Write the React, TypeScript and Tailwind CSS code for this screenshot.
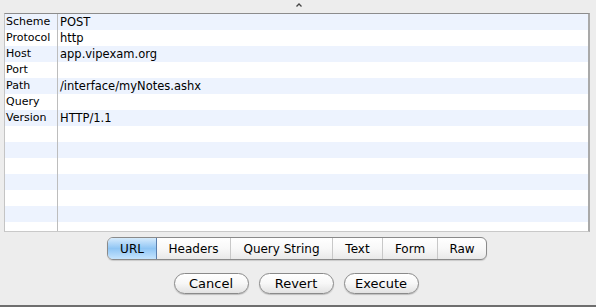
import React from 'react';

const rows: [string, string][] = [
    ['Scheme', 'POST'],
    ['Protocol', 'http'],
    ['Host', 'app.vipexam.org'],
    ['Port', ''],
    ['Path', '/interface/myNotes.ashx'],
    ['Query', ''],
    ['Version', 'HTTP/1.1'],
    ['', ''],
    ['', ''],
    ['', ''],
    ['', ''],
    ['', ''],
    ['', ''],
    ['', ''],
];

const tabs = [
    { label: 'URL', w: 'w-[49px]' },
    { label: 'Headers', w: 'w-[74px]' },
    { label: 'Query String', w: 'w-[102px]' },
    { label: 'Text', w: 'w-[50px]' },
    { label: 'Form', w: 'w-[55px]' },
    { label: 'Raw', w: 'w-[48px]' },
];

const App = () => {
    return (
        <div className="relative h-[307px] w-[596px] overflow-hidden bg-[#ededed] font-['DejaVu_Sans',sans-serif] text-black">
            {/* splitter grip */}
            <div className="flex h-[13px] justify-center pl-[1px] pt-[3px]">
                <svg width="6" height="4" viewBox="0 0 6 4">
                    <path d="M0.5 3.5 L3 1 L5.5 3.5" fill="none" stroke="#444" strokeWidth="1.3" />
                </svg>
            </div>
            {/* url table */}
            <div className="ml-[4px] h-[219px] w-[586px] overflow-hidden border-l border-t border-r-2 border-b border-l-[#c4c4c4] border-t-[#8c8c8c] border-r-[#a9a9a9] border-b-[#c9c9c9] bg-white">
                {rows.map(([name, value], i) => (
                    <div
                        key={i}
                        className={`flex h-[16px] leading-[16px] ${i % 2 === 0 ? 'bg-[#edf3fe]' : 'bg-white'}`}
                    >
                        <div className="w-[53px] shrink-0 border-r border-[#bdbdbd] pl-[1px] text-[11px]">{name}</div>
                        <div className="pl-[2px] text-[11.5px]">{value}</div>
                    </div>
                ))}
            </div>
            {/* view tabs */}
            <div className="mt-[5px] flex justify-center pr-[2px]">
                <div className="flex h-[23px] overflow-hidden rounded-[6px] border border-[#8a8a8a] bg-gradient-to-b from-white via-[#f8f8f8] to-[#e9e9e9] shadow-[0_1px_1px_rgba(0,0,0,0.15)]">
                    {tabs.map((tab, i) => (
                        <div
                            key={tab.label}
                            className={`flex ${tab.w} items-center justify-center text-[12px] ${
                                i === 0
                                    ? 'border-r border-[#5b7fae] bg-gradient-to-b from-[#d6ebfc] via-[#8fc5f4] to-[#c5e4fd]'
                                    : i < tabs.length - 1
                                      ? 'border-r border-[#c8c8c8]'
                                      : ''
                            }`}
                        >
                            {tab.label}
                        </div>
                    ))}
                </div>
            </div>
            {/* actions */}
            <div className="mt-[13px] flex justify-center gap-[10px] pr-[4px]">
                {['Cancel', 'Revert', 'Execute'].map((label) => (
                    <button
                        key={label}
                        className="h-[21px] w-[75px] rounded-full border border-[#8a8a8a] bg-gradient-to-b from-white via-[#f7f7f7] to-[#e2e2e2] text-[13px] leading-[19px] shadow-[0_1px_1px_rgba(0,0,0,0.2)]"
                    >
                        {label}
                    </button>
                ))}
            </div>
            <div className="absolute bottom-0 left-0 h-[2px] w-full bg-[#6e6e6e]" />
        </div>
    );
};

export default App;
